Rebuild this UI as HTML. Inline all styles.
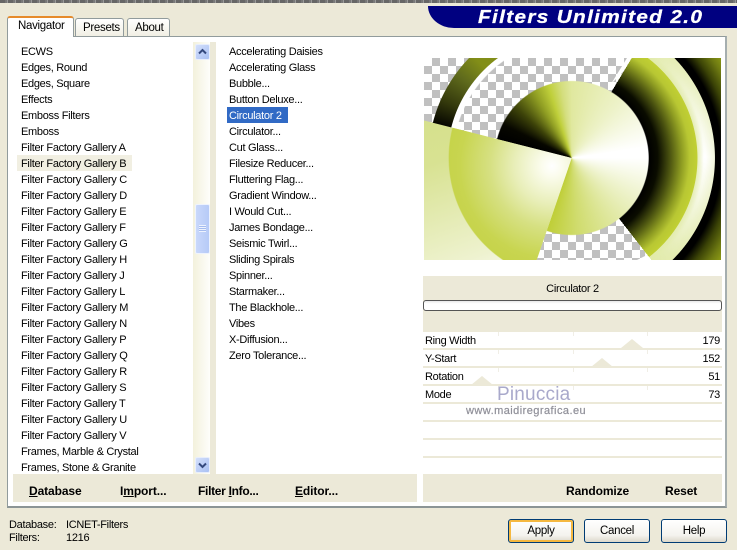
<!DOCTYPE html>
<html><head><meta charset="utf-8"><style>
html,body{margin:0;padding:0}
body{width:737px;height:550px;overflow:hidden;position:relative;background:#ece9d8;font-family:"Liberation Sans",sans-serif;font-size:11px;letter-spacing:-.3px;color:#000}
.list div{position:absolute;white-space:nowrap;height:16px;line-height:18px}
.b{font-weight:bold;font-size:12px;white-space:nowrap;line-height:14px;letter-spacing:-.1px}
.btn{position:absolute;box-sizing:border-box;width:66px;height:24px;top:519px;border:1px solid #003c74;border-radius:3px;background:linear-gradient(#fff,#f4f3ee 70%,#dcd8ca);text-align:center;line-height:22px;font-size:11.5px}
.ring{position:absolute;left:0;top:0;width:297px;height:202px}
.row{position:absolute;left:423px;width:299px;height:16px;background:#fff;overflow:hidden}
.lab{position:absolute;left:425px;line-height:18px;white-space:nowrap}
.val{position:absolute;right:17px;line-height:18px;white-space:nowrap}
.tri{position:absolute;width:0;height:0;border-left:11px solid transparent;border-right:11px solid transparent;border-bottom:9px solid #ece9d8}
.tk{position:absolute;width:1px;height:4px;background:#f0eee6}
.tab{position:absolute;line-height:15px;font-size:11.5px;letter-spacing:-.3px}
</style></head><body>
<div style="position:absolute;left:0;top:0;width:737px;height:3px;background:repeating-linear-gradient(90deg,#666 0 5px,#777 5px 7px,#999 7px 8px)"></div>

<!-- banner -->
<div style="position:absolute;left:428px;top:6px;width:309px;height:22px;background:#000080;border-bottom-left-radius:26px 22px"></div>
<div style="position:absolute;left:478px;top:6px;height:22px;line-height:23px;color:#fff;font-weight:bold;font-style:italic;font-size:18px;white-space:nowrap;letter-spacing:1.15px;-webkit-text-stroke:.3px #fff;transform:scaleX(1.154);transform-origin:0 0">Filters Unlimited 2.0</div>

<!-- tabs -->
<div style="position:absolute;left:75px;top:18px;width:49px;height:19px;box-sizing:border-box;border:1px solid #919b9c;border-bottom:0;border-radius:3px 3px 0 0;background:linear-gradient(#fff,#f0eee2)"></div>
<div style="position:absolute;left:127px;top:18px;width:43px;height:19px;box-sizing:border-box;border:1px solid #919b9c;border-bottom:0;border-radius:3px 3px 0 0;background:linear-gradient(#fff,#f0eee2)"></div>
<!-- panel -->
<div style="position:absolute;left:7px;top:36px;width:720px;height:472px;box-sizing:border-box;border:1px solid #919b9c;border-bottom:2px solid #8c9596;border-right:2px solid #a5aeaf;background:#fff"></div>
<div style="position:absolute;left:7px;top:16px;width:67px;height:21px;box-sizing:border-box;border:1px solid #919b9c;border-bottom:0;border-top:2px solid #e68b2c;border-radius:3px 3px 0 0;background:#fff"></div>
<div class="tab" style="left:18px;top:19px">Navigator</div>
<div class="tab" style="left:83px;top:21px">Presets</div>
<div class="tab" style="left:135px;top:21px">About</div>

<!-- left list -->
<div style="position:absolute;left:17px;top:155px;width:115px;height:16px;background:#f1efe2"></div>
<div class="list" style="position:absolute;left:21px;top:0">
<div style="top:43px">ECWS</div><div style="top:59px">Edges, Round</div><div style="top:75px">Edges, Square</div><div style="top:91px">Effects</div><div style="top:107px">Emboss Filters</div><div style="top:123px">Emboss</div><div style="top:139px">Filter Factory Gallery A</div><div style="top:155px">Filter Factory Gallery B</div><div style="top:171px">Filter Factory Gallery C</div><div style="top:187px">Filter Factory Gallery D</div><div style="top:203px">Filter Factory Gallery E</div><div style="top:219px">Filter Factory Gallery F</div><div style="top:235px">Filter Factory Gallery G</div><div style="top:251px">Filter Factory Gallery H</div><div style="top:267px">Filter Factory Gallery J</div><div style="top:283px">Filter Factory Gallery L</div><div style="top:299px">Filter Factory Gallery M</div><div style="top:315px">Filter Factory Gallery N</div><div style="top:331px">Filter Factory Gallery P</div><div style="top:347px">Filter Factory Gallery Q</div><div style="top:363px">Filter Factory Gallery R</div><div style="top:379px">Filter Factory Gallery S</div><div style="top:395px">Filter Factory Gallery T</div><div style="top:411px">Filter Factory Gallery U</div><div style="top:427px">Filter Factory Gallery V</div><div style="top:443px">Frames, Marble &amp; Crystal</div><div style="top:459px">Frames, Stone &amp; Granite</div>
</div>

<!-- scrollbar -->
<div style="position:absolute;left:193px;top:42px;width:17px;height:432px;background:linear-gradient(90deg,#f3f1dc,#fefefb)"></div>
<div style="position:absolute;left:210px;top:42px;width:6px;height:432px;background:#ece9d8"></div>
<div style="position:absolute;left:195px;top:44px;width:15px;height:16px;box-sizing:border-box;border:1px solid #e8eefb;border-radius:2px;background:linear-gradient(135deg,#d3dffb,#a9c0f3)"></div>
<svg style="position:absolute;left:195px;top:44px" width="15" height="16"><path d="M4 9.5 L7.5 6 L11 9.5" fill="none" stroke="#34497e" stroke-width="2"/></svg>
<div style="position:absolute;left:195px;top:204px;width:15px;height:50px;box-sizing:border-box;border:1px solid #eef3fd;border-radius:2px;background:linear-gradient(90deg,#c9d8fb,#b6caf7)"></div>
<div style="position:absolute;left:199px;top:225px;width:7px;height:7px;background:repeating-linear-gradient(#eef3fe 0 1px,#a5bcef 1px 2px)"></div>
<div style="position:absolute;left:195px;top:457px;width:15px;height:16px;box-sizing:border-box;border:1px solid #e8eefb;border-radius:2px;background:linear-gradient(135deg,#d3dffb,#a9c0f3)"></div>
<svg style="position:absolute;left:195px;top:457px" width="15" height="16"><path d="M4 6.5 L7.5 10 L11 6.5" fill="none" stroke="#34497e" stroke-width="2"/></svg>

<!-- middle list -->
<div style="position:absolute;left:227px;top:107px;width:61px;height:16px;background:#316ac5"></div>
<div class="list" style="position:absolute;left:229px;top:0">
<div style="top:43px">Accelerating Daisies</div><div style="top:59px">Accelerating Glass</div><div style="top:75px">Bubble...</div><div style="top:91px">Button Deluxe...</div><div style="top:107px;color:#fff">Circulator 2</div><div style="top:123px">Circulator...</div><div style="top:139px">Cut Glass...</div><div style="top:155px">Filesize Reducer...</div><div style="top:171px">Fluttering Flag...</div><div style="top:187px">Gradient Window...</div><div style="top:203px">I Would Cut...</div><div style="top:219px">James Bondage...</div><div style="top:235px">Seismic Twirl...</div><div style="top:251px">Sliding Spirals</div><div style="top:267px">Spinner...</div><div style="top:283px">Starmaker...</div><div style="top:299px">The Blackhole...</div><div style="top:315px">Vibes</div><div style="top:331px">X-Diffusion...</div><div style="top:347px">Zero Tolerance...</div>
</div>

<!-- preview -->
<div style="position:absolute;left:424px;top:58px;width:297px;height:202px;overflow:hidden;background:#fff">
<div class="ring" style="background-color:#fff;background-image:conic-gradient(#c0c0c0 25%,#fff 0 50%,#c0c0c0 0 75%,#fff 0);background-size:16px 16px"></div>
<!-- white bands -->
<div class="ring" style="background:radial-gradient(circle at 147.7px 100px,transparent 118px,#fff 119px,#fff 124px,transparent 125px);-webkit-mask:conic-gradient(at 147.7px 100px,transparent 284deg,#000 284deg 340deg,transparent 340deg);mask:conic-gradient(at 147.7px 100px,transparent 284deg,#000 284deg 340deg,transparent 340deg)"></div>
<div class="ring" style="background:#fff;clip-path:polygon(195px 18px,212px 0,203px 0,187px 26px)"></div>
<div class="ring" style="background:#fff;clip-path:polygon(221px 198px,213px 202px,240px 202px,222px 176px)"></div>
<!-- top left arc -->
<div class="ring" style="background:conic-gradient(from 284deg at 147.7px 100px,#050500 0deg,#34390c 10deg,#5f6a1c 22deg,#828e18 32deg,#828e18 56deg,transparent 56deg);-webkit-mask:radial-gradient(circle at 147.7px 100px,transparent 124px,#000 124.5px,#000 143px,transparent 143.5px);mask:radial-gradient(circle at 147.7px 100px,transparent 124px,#000 124.5px,#000 143px,transparent 143.5px)"></div>
<!-- right rings -->
<div class="ring" style="background:radial-gradient(circle at 147.7px 100px,#000 0,#000 77px,#0a0c00 86px,#4a5210 98px,#8e9c22 110px,#b8c733 118px,#c0cf33 125px,#c0cf33 125.5px,#e8efbe 126px,#fff 132px,#fff 134px,#f4f7df 143px,#000 143.5px,#000 150px,#3a4206 160px,#6f7b12 172px,#8a9815 180px);-webkit-mask:conic-gradient(at 147.7px 100px,transparent 31deg,#000 31deg 142deg,transparent 142deg);mask:conic-gradient(at 147.7px 100px,transparent 31deg,#000 31deg 142deg,transparent 142deg)"></div>
<div class="ring" style="background:conic-gradient(from 0deg at 147.7px 100px,rgba(225,234,170,1) 31deg,rgba(225,234,170,.9) 40deg,rgba(255,255,255,0) 90deg,rgba(225,234,170,.9) 135deg,rgba(225,234,170,1) 142deg,transparent 142deg);-webkit-mask:radial-gradient(circle at 147.7px 100px,transparent 125.5px,#000 126px,#000 143px,transparent 143.5px),conic-gradient(at 147.7px 100px,transparent 31deg,#000 31deg 142deg,transparent 142deg);-webkit-mask-composite:source-in;mask:radial-gradient(circle at 147.7px 100px,transparent 125.5px,#000 126px,#000 143px,transparent 143.5px),conic-gradient(at 147.7px 100px,transparent 31deg,#000 31deg 142deg,transparent 142deg);mask-composite:intersect"></div>
<!-- disc -->
<div class="ring" style="background:conic-gradient(from 0deg at 147.7px 100px,#e0e89f 0deg,#edf2c8 40deg,#fff 82deg,#fff 90deg,#e9efbd 130deg,#d0dc6e 175deg,#bfce37 199deg,#bfce37 284deg,#000 284deg,#070700 296deg,#3d4309 312deg,#8f9d23 330deg,#bfcf3a 342deg,#d4de7e 352deg,#e0e89f 360deg);-webkit-mask:radial-gradient(circle at 147.7px 100px,#000 76.5px,transparent 77.5px);mask:radial-gradient(circle at 147.7px 100px,#000 76.5px,transparent 77.5px)"></div>
<!-- big wedge outer -->
<div class="ring" style="background:linear-gradient(160deg,#d3de85 0,#d8e292 35%,#eef2cf 70%,#fff 88%);clip-path:polygon(147.7px 100px,-2px 62px,-2px 204px,112px 204px)"></div>
<!-- big wedge inner -->
<div class="ring" style="background:radial-gradient(circle at 128px 108px,#fff 0,#fbfcee 10px,#e8eeb8 38px,#d6e082 62px,#c8d550 92px,#c2d03f 130px);-webkit-mask:radial-gradient(circle at 147.7px 100px,#000 122.5px,transparent 123.5px);mask:radial-gradient(circle at 147.7px 100px,#000 122.5px,transparent 123.5px);clip-path:polygon(147.7px 100px,-2px 62px,-2px 204px,112px 204px)"></div>
</div>

<!-- title -->
<div style="position:absolute;left:423px;top:276px;width:299px;height:56px;background:#ece9d8"></div>
<div style="position:absolute;left:423px;top:280px;width:299px;text-align:center;line-height:18px">Circulator 2</div>
<div style="position:absolute;left:423px;top:300px;width:299px;height:11px;box-sizing:border-box;border:1px solid #555;border-radius:3px;background:linear-gradient(#e8e8e8,#fff 30%,#fff)"></div>

<!-- rows -->
<div style="position:absolute;left:423px;top:332px;width:299px;height:142px;background:#ece9d8"></div>
<div class="row" style="top:332px"><div class="tri" style="left:198px;top:7px"></div><div class="tk" style="left:75px;top:0"></div><div class="tk" style="left:150px;top:0"></div><div class="tk" style="left:224px;top:0"></div></div>
<div class="row" style="top:350px"><div class="tri" style="left:168px;top:8px"></div><div class="tk" style="left:75px;top:0"></div><div class="tk" style="left:150px;top:0"></div><div class="tk" style="left:224px;top:0"></div></div>
<div class="row" style="top:368px"><div class="tri" style="left:48px;top:8px"></div><div class="tk" style="left:75px;top:0"></div><div class="tk" style="left:150px;top:0"></div><div class="tk" style="left:224px;top:0"></div></div>
<div class="row" style="top:386px"><div class="tk" style="left:75px;top:0"></div><div class="tk" style="left:150px;top:0"></div><div class="tk" style="left:224px;top:0"></div></div>
<div class="row" style="top:404px"></div>
<div class="row" style="top:422px"></div>
<div class="row" style="top:440px"></div>
<div class="row" style="top:458px"></div>
<div class="lab" style="top:332px">Ring Width</div><div class="val" style="top:332px">179</div>
<div class="lab" style="top:350px">Y-Start</div><div class="val" style="top:350px">152</div>
<div class="lab" style="top:368px">Rotation</div><div class="val" style="top:368px">51</div>
<div class="lab" style="top:386px">Mode</div><div class="val" style="top:386px">73</div>
<div style="position:absolute;left:497px;top:384px;line-height:22px;font-size:19px;color:#a9a9cb;letter-spacing:.2px;white-space:nowrap">Pinuccia</div>
<div style="position:absolute;left:466px;top:404px;line-height:14px;font-size:11px;color:#8f8f98;letter-spacing:.45px;white-space:nowrap;-webkit-text-stroke:.2px #8f8f98">www.maidiregrafica.eu</div>

<!-- bottom bars -->
<div style="position:absolute;left:13px;top:474px;width:404px;height:28px;background:#ece9d8"></div>
<div style="position:absolute;left:423px;top:474px;width:299px;height:28px;background:#ece9d8"></div>
<div class="b" style="position:absolute;left:29px;top:484px"><u>D</u>atabase</div>
<div class="b" style="position:absolute;left:120px;top:484px">I<u>m</u>port...</div>
<div class="b" style="position:absolute;left:198px;top:484px;letter-spacing:-.3px">Filter <u>I</u>nfo...</div>
<div class="b" style="position:absolute;left:295px;top:484px"><u>E</u>ditor...</div>
<div class="b" style="position:absolute;left:566px;top:484px">Randomize</div>
<div class="b" style="position:absolute;left:665px;top:484px">Reset</div>

<!-- footer -->
<div style="position:absolute;left:9px;top:518px;line-height:14px">Database:</div>
<div style="position:absolute;left:66px;top:518px;line-height:14px">ICNET-Filters</div>
<div style="position:absolute;left:9px;top:531px;line-height:14px">Filters:</div>
<div style="position:absolute;left:66px;top:531px;line-height:14px">1216</div>

<div class="btn" style="left:508px;box-shadow:inset 0 0 0 2px #f5b840">Apply</div>
<div class="btn" style="left:584px">Cancel</div>
<div class="btn" style="left:661px">Help</div>
</body></html>
